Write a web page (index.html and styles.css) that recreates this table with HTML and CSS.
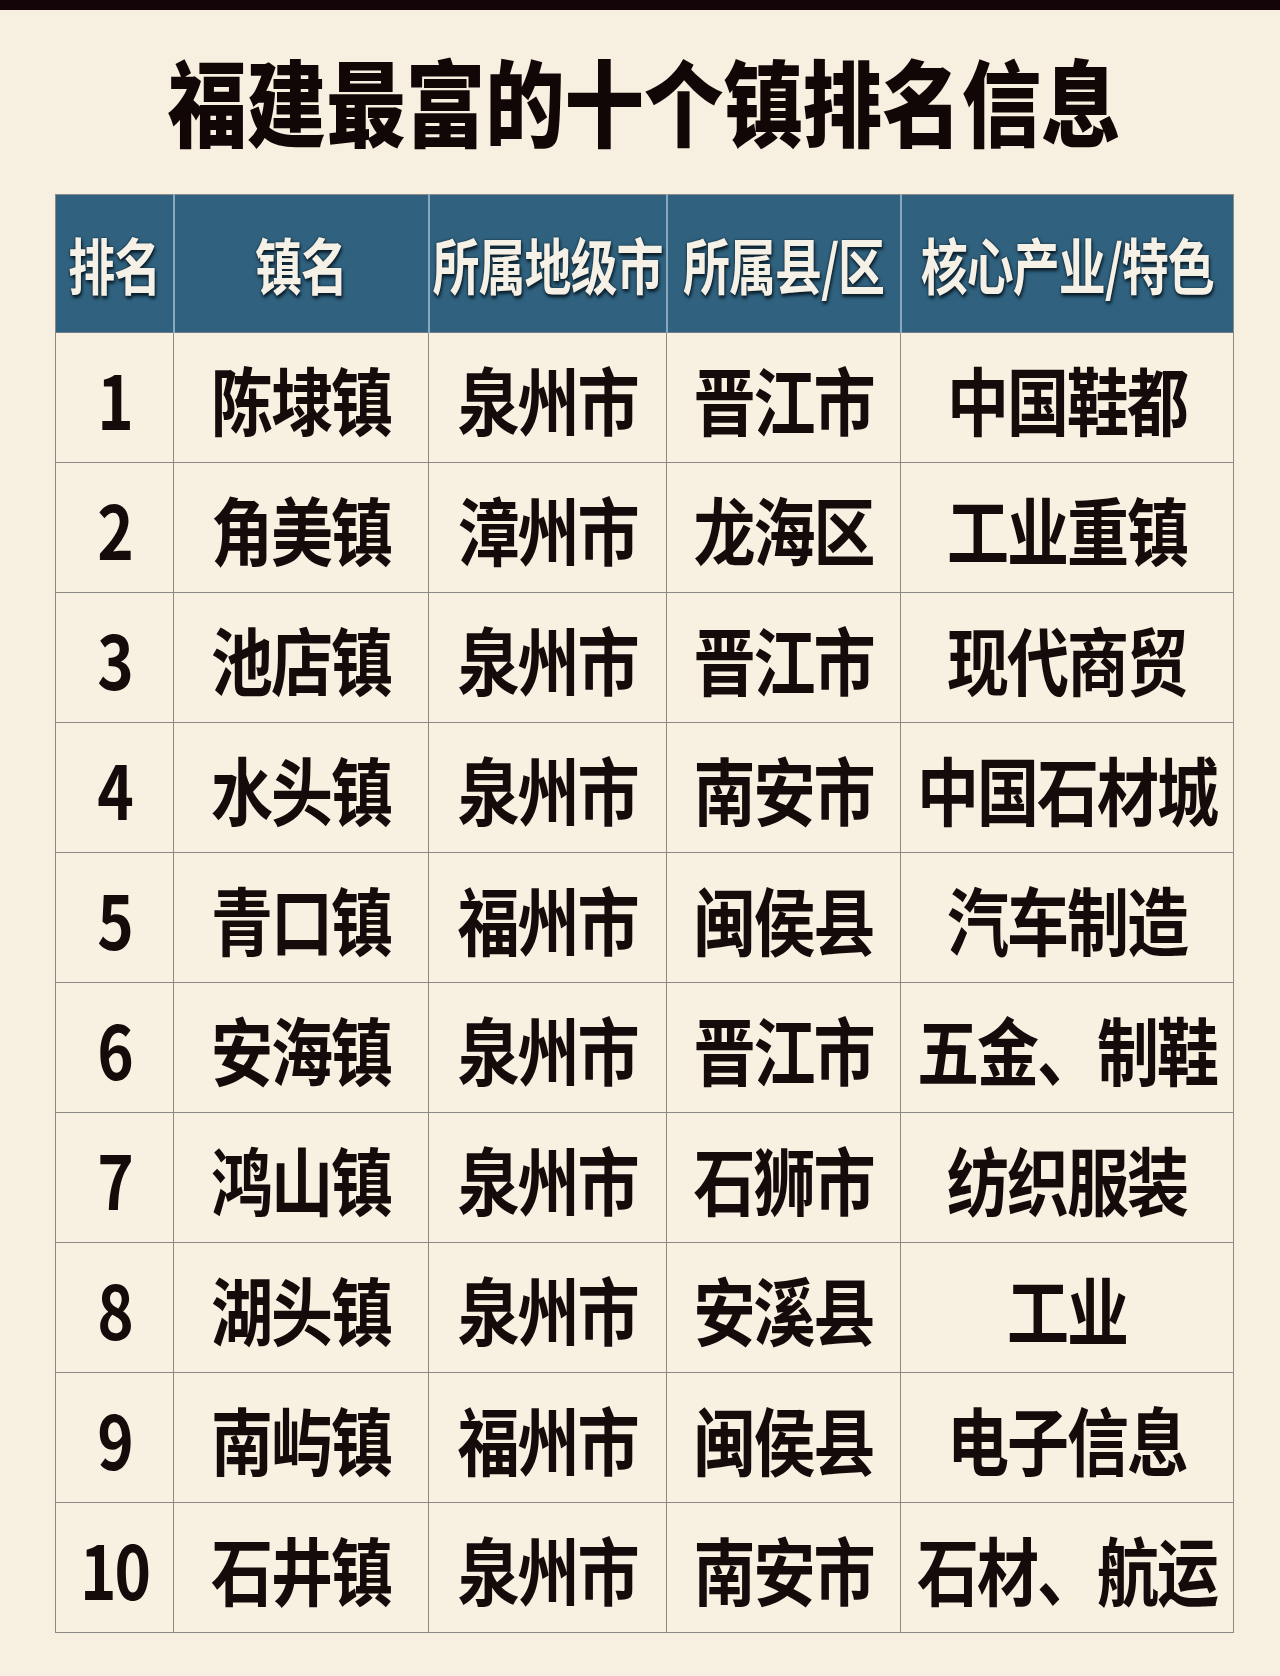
FILE: index.html
```html
<!DOCTYPE html>
<html lang="zh-CN">
<head>
<meta charset="utf-8">
<title>福建最富的十个镇排名信息</title>
<link rel="stylesheet" href="styles.css">
</head>
<body>
<div class="topbar"></div>
<header class="title-wrap">
  <h1 class="title"><span class="title-text">福建最富的十个镇排名信息</span></h1>
</header>
<table class="rank">
  <colgroup>
    <col class="c1"><col class="c2"><col class="c3"><col class="c4"><col class="c5">
  </colgroup>
  <thead>
    <tr>
      <th><span class="t">排名</span></th>
      <th><span class="t">镇名</span></th>
      <th><span class="t">所属地级市</span></th>
      <th><span class="t">所属县/区</span></th>
      <th><span class="t">核心产业/特色</span></th>
    </tr>
  </thead>
  <tbody>
    <tr><td><span class="t">1</span></td><td><span class="t">陈埭镇</span></td><td><span class="t">泉州市</span></td><td><span class="t">晋江市</span></td><td><span class="t">中国鞋都</span></td></tr>
    <tr><td><span class="t">2</span></td><td><span class="t">角美镇</span></td><td><span class="t">漳州市</span></td><td><span class="t">龙海区</span></td><td><span class="t">工业重镇</span></td></tr>
    <tr><td><span class="t">3</span></td><td><span class="t">池店镇</span></td><td><span class="t">泉州市</span></td><td><span class="t">晋江市</span></td><td><span class="t">现代商贸</span></td></tr>
    <tr><td><span class="t">4</span></td><td><span class="t">水头镇</span></td><td><span class="t">泉州市</span></td><td><span class="t">南安市</span></td><td><span class="t">中国石材城</span></td></tr>
    <tr><td><span class="t">5</span></td><td><span class="t">青口镇</span></td><td><span class="t">福州市</span></td><td><span class="t">闽侯县</span></td><td><span class="t">汽车制造</span></td></tr>
    <tr><td><span class="t">6</span></td><td><span class="t">安海镇</span></td><td><span class="t">泉州市</span></td><td><span class="t">晋江市</span></td><td><span class="t">五金、制鞋</span></td></tr>
    <tr><td><span class="t">7</span></td><td><span class="t">鸿山镇</span></td><td><span class="t">泉州市</span></td><td><span class="t">石狮市</span></td><td><span class="t">纺织服装</span></td></tr>
    <tr><td><span class="t">8</span></td><td><span class="t">湖头镇</span></td><td><span class="t">泉州市</span></td><td><span class="t">安溪县</span></td><td><span class="t">工业</span></td></tr>
    <tr><td><span class="t">9</span></td><td><span class="t">南屿镇</span></td><td><span class="t">福州市</span></td><td><span class="t">闽侯县</span></td><td><span class="t">电子信息</span></td></tr>
    <tr><td><span class="t">10</span></td><td><span class="t">石井镇</span></td><td><span class="t">泉州市</span></td><td><span class="t">南安市</span></td><td><span class="t">石材、航运</span></td></tr>
  </tbody>
</table>
</body>
</html>
```

FILE: styles.css
```css
html, body {
  margin: 0;
  padding: 0;
}
body {
  width: 1280px;
  min-height: 1676px;
  background: #f7efdf;
  font-family: "Noto Sans CJK SC", "Noto Sans", sans-serif;
  color: #140b0b;
}
.topbar {
  height: 10px;
  background: #140608;
}
.title-wrap {
  height: 184px;
  display: flex;
  align-items: center;
  justify-content: center;
  padding: 0 0 6px 8px;
  box-sizing: border-box;
}
.title {
  margin: 0;
  font-size: 94px;
  font-weight: 900;
  letter-spacing: 0;
  line-height: 1;
  color: #120707;
  white-space: nowrap;
}
.title-text {
  display: inline-block;
  transform: scaleX(0.845);
}
.rank {
  margin-left: 55px;
  width: 1178px;
  border-collapse: collapse;
  table-layout: fixed;
  border: 1px solid #8c8a86;
}
.c1 { width: 118px; }
.c2 { width: 255px; }
.c3 { width: 238px; }
.c4 { width: 234px; }
.c5 { width: 333px; }
.rank th {
  height: 137px;
  padding: 0;
  background: #30627f;
  color: #f6f1e6;
  font-size: 47px;
  font-weight: 700;
  text-align: center;
  white-space: nowrap;
  border-left: 2px solid #87a9bb;
  border-bottom: 1px solid #6f7f88;
  text-shadow: 0 0 2px #0b1e2b, 1px 2px 3px #0b1e2b;
  letter-spacing: -1px;
}
.rank th:first-child {
  border-left: none;
}
.rank td {
  height: 129px;
  padding: 0;
  text-align: center;
  white-space: nowrap;
  font-size: 62px;
  font-weight: 700;
  letter-spacing: -2px;
  border: 1px solid #8c8a86;
  background: #f8f0e1;
}
.rank .t {
  display: inline-block;
  transform: scaleY(1.2);
}
.rank th .t {
  transform: scaleY(1.3);
}
```
